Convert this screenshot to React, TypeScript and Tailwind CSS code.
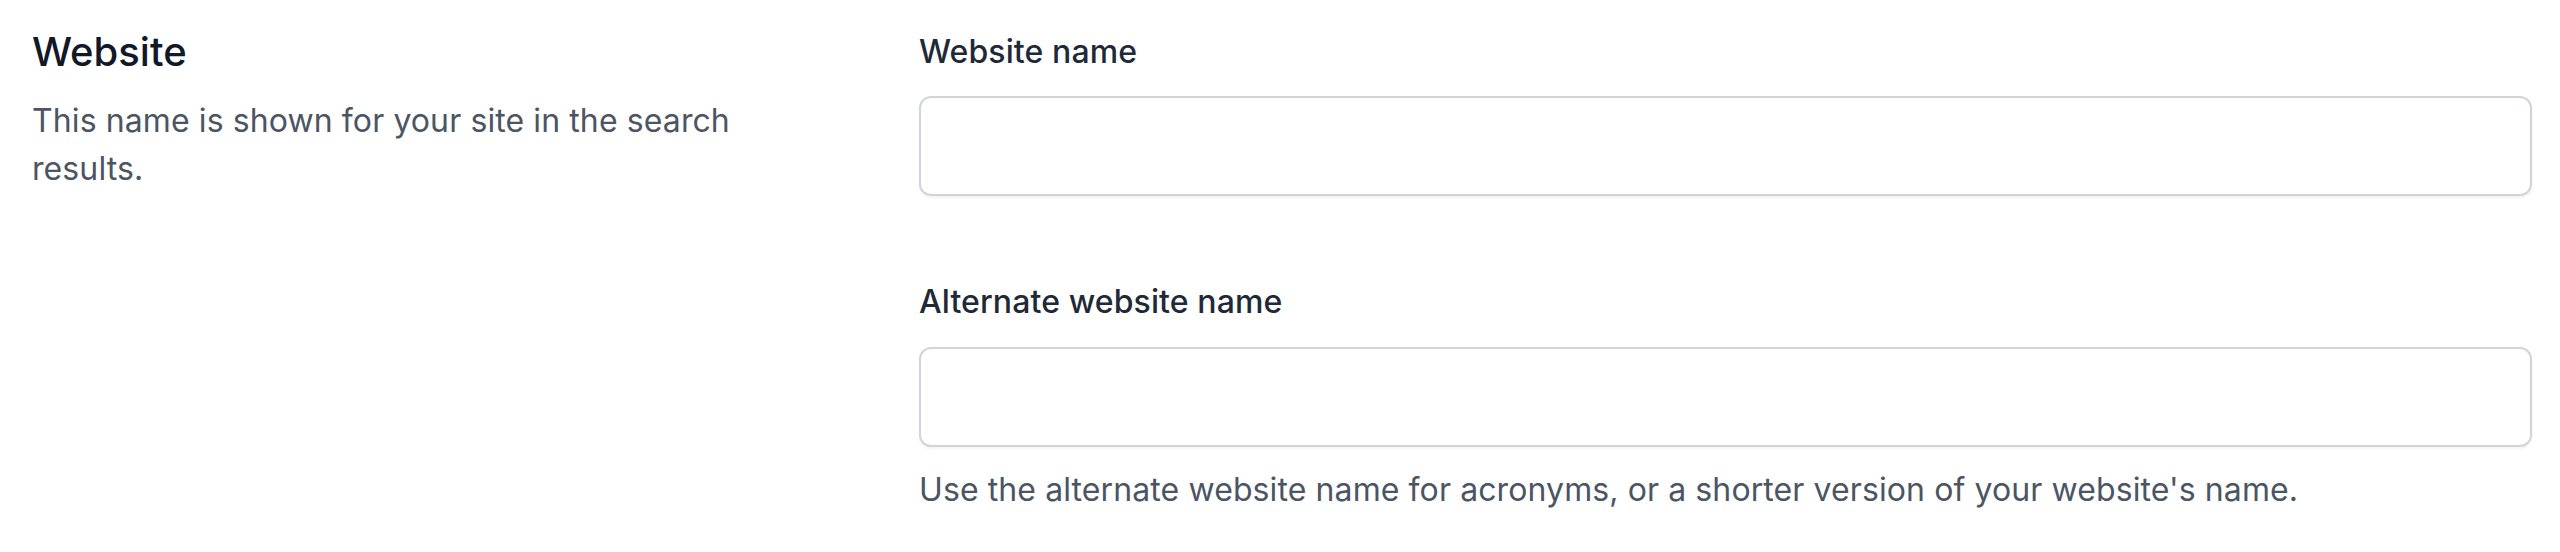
export default function App() {
  return (
    <div
      className="w-[2560px] h-[552px] bg-white pl-[32px] pr-[28px]"
      style={{ fontFamily: 'Inter, "Noto Sans", sans-serif' }}
    >
      <div className="flex gap-[127px]">
        {/* Section intro */}
        <div className="w-[760px] pt-[24px]">
          <h2 className="text-[40px] leading-[56px] font-medium text-[#111827]">Website</h2>
          <p className="mt-[17px] text-[32px] leading-[48px] tracking-[0.1px] text-[#4b5563]">
            This name is shown for your site in the search results.
          </p>
        </div>

        {/* Fields */}
        <div className="flex-1 pt-[28px]">
          <label className="block text-[32px] leading-[48px] font-medium tracking-[0.1px] text-[#1f2937]">
            Website name
          </label>
          <input
            type="text"
            className="mt-[20px] block w-full h-[100px] rounded-[12px] border-2 border-[#d1d5db] bg-white px-6 text-[32px] text-[#111827] shadow-[0_2px_3px_rgba(17,24,39,0.05)] outline-none"
          />

          <label className="mt-[82px] block text-[32px] leading-[48px] font-medium tracking-[0.1px] text-[#1f2937]">
            Alternate website name
          </label>
          <input
            type="text"
            className="mt-[21px] block w-full h-[100px] rounded-[12px] border-2 border-[#d1d5db] bg-white px-6 text-[32px] text-[#111827] shadow-[0_2px_3px_rgba(17,24,39,0.05)] outline-none"
          />
          <p className="mt-[19px] text-[32px] leading-[48px] tracking-[0.1px] text-[#4b5563]">
            Use the alternate website name for acronyms, or a shorter version of your website's name.
          </p>
        </div>
      </div>
    </div>
  );
}
